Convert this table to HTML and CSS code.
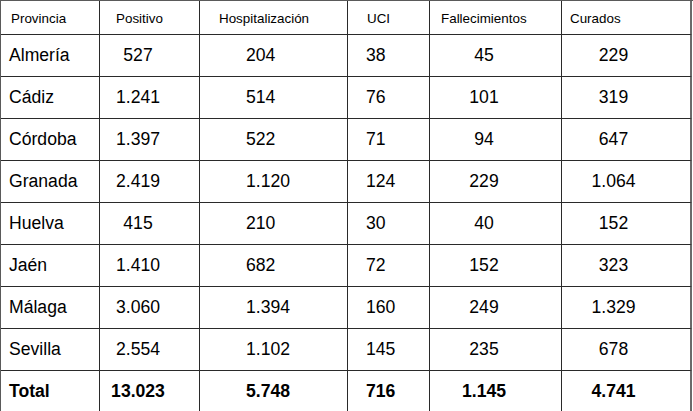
FILE: index.html
```html
<!DOCTYPE html>
<html lang="es">
<head>
<meta charset="utf-8">
<title>Casos por provincia</title>
<link rel="stylesheet" href="styles.css">
</head>
<body>
<div class="grid">
  <div class="cell head c1">Provincia</div>
  <div class="cell head c2">Positivo</div>
  <div class="cell head c3">Hospitalización</div>
  <div class="cell head c4">UCI</div>
  <div class="cell head c5">Fallecimientos</div>
  <div class="cell head c6">Curados</div>

  <div class="cell c1">Almería</div><div class="cell c2">527</div><div class="cell c3">204</div><div class="cell c4">38</div><div class="cell c5">45</div><div class="cell c6">229</div>
  <div class="cell c1">Cádiz</div><div class="cell c2">1.241</div><div class="cell c3">514</div><div class="cell c4">76</div><div class="cell c5">101</div><div class="cell c6">319</div>
  <div class="cell c1">Córdoba</div><div class="cell c2">1.397</div><div class="cell c3">522</div><div class="cell c4">71</div><div class="cell c5">94</div><div class="cell c6">647</div>
  <div class="cell c1">Granada</div><div class="cell c2">2.419</div><div class="cell c3">1.120</div><div class="cell c4">124</div><div class="cell c5">229</div><div class="cell c6">1.064</div>
  <div class="cell c1">Huelva</div><div class="cell c2">415</div><div class="cell c3">210</div><div class="cell c4">30</div><div class="cell c5">40</div><div class="cell c6">152</div>
  <div class="cell c1">Jaén</div><div class="cell c2">1.410</div><div class="cell c3">682</div><div class="cell c4">72</div><div class="cell c5">152</div><div class="cell c6">323</div>
  <div class="cell c1">Málaga</div><div class="cell c2">3.060</div><div class="cell c3">1.394</div><div class="cell c4">160</div><div class="cell c5">249</div><div class="cell c6">1.329</div>
  <div class="cell c1">Sevilla</div><div class="cell c2">2.554</div><div class="cell c3">1.102</div><div class="cell c4">145</div><div class="cell c5">235</div><div class="cell c6">678</div>
  <div class="cell total c1">Total</div><div class="cell total c2">13.023</div><div class="cell total c3">5.748</div><div class="cell total c4">716</div><div class="cell total c5">1.145</div><div class="cell total c6">4.741</div>
</div>
</body>
</html>
```

FILE: styles.css
```css
html, body {
  margin: 0;
  padding: 0;
  background: #ffffff;
}

body {
  font-family: "Liberation Sans", Arial, sans-serif;
  color: #000000;
  overflow: hidden;
}

.grid {
  display: grid;
  grid-template-columns: 99px 100px 148px 82px 132px 130px;
  grid-template-rows: 34px repeat(9, 42px);
  width: 692px;
  border-left: 1px solid #5a5a5a;
  border-top: 1px solid #5a5a5a;
}

.cell {
  box-sizing: border-box;
  border-right: 1px solid #2a2a2a;
  border-bottom: 1px solid #2a2a2a;
  display: flex;
  align-items: center;
  font-size: 17.6px;
  white-space: nowrap;
}

.cell.c6 {
  border-right: 2px solid #6a6a6a;
}

.cell.head {
  font-size: 13.4px;
  justify-content: flex-start;
  padding-top: 1px;
}

.total {
  font-weight: bold;
}

/* body columns */
.c1 { padding-left: 8px; }
.c2 { justify-content: center; padding-right: 23px; }
.c3 { padding-left: 46px; }
.c4 { padding-left: 18px; }
.c5 { justify-content: center; padding-right: 23px; }
.c6 { justify-content: center; padding-right: 25px; }

/* header columns */
.head.c1 { padding-left: 10px; }
.head.c2 { padding-left: 16px; padding-right: 0; }
.head.c3 { padding-left: 19px; }
.head.c4 { padding-left: 19px; }
.head.c5 { padding-left: 11px; padding-right: 0; }
.head.c6 { padding-left: 8px; padding-right: 0; }
```
